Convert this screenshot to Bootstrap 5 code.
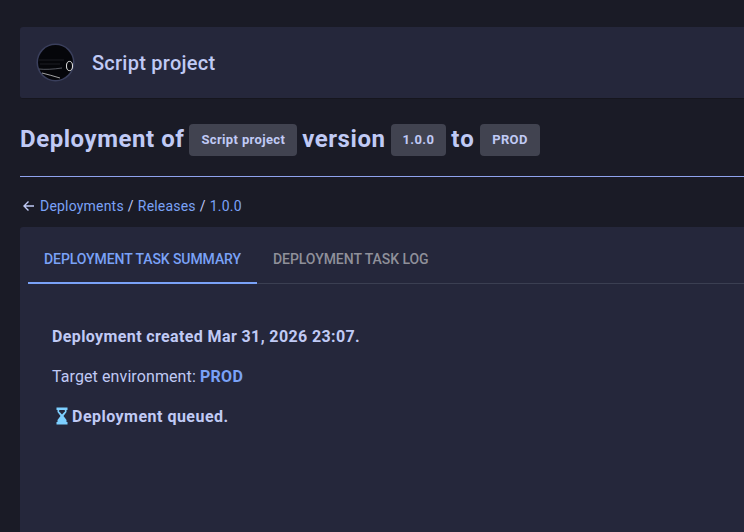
<!DOCTYPE html>
<html lang="en">
<head>
    <meta charset="UTF-8">
    <title>Deployment</title>
    <link href="https://cdn.jsdelivr.net/npm/bootstrap@5.3.0/dist/css/bootstrap.min.css" rel="stylesheet">
    <style>
        html, body { height: 532px; overflow: hidden; }
        body { background: #1a1b26; color: #c0caf5; font-family: "Roboto", "Noto Sans", sans-serif; font-size: 16px; width: 744px; }
        a { color: #7aa2f7; text-decoration: none; }
        .page-wrap { padding: 27px 0 0 20px; width: 780px; }
        .project-head { background: #25273b; height: 72px; border-bottom: 1px solid #16161e; border-radius: 3px 0 0 3px; padding-left: 16px; gap: 17px; }
        .project-logo { width: 39px; height: 39px; flex: none; }
        .project-name { font-size: 20px; font-weight: 500; letter-spacing: .25px; }
        .deploy-title { font-size: 24px; font-weight: 700; letter-spacing: .55px; height: 32px; margin: 25px 0 20px; gap: 5px; }
        .deploy-title > span:not(.tag-chip) { margin-top: -2px; }
        .deploy-title > .title-to { letter-spacing: 1.3px; }
        .tag-chip { background: #414350; font-size: 13px; font-weight: 700; letter-spacing: .36px; border-radius: 4px; height: 32px; padding: 0 12px; display: inline-flex; align-items: center; }
        .title-rule { height: 1px; background: #8fa3ee; margin-bottom: 19px; }
        .crumbs { font-size: 14px; letter-spacing: .2px; height: 20px; margin-bottom: 11px; gap: 4px; padding-left: 1px; }
        .crumb-sep { color: #c0caf5; }
        .task-panel { background: #25273b; height: 320px; padding-top: 6px; border-radius: 3px 0 0 0; }
        .task-tabs { margin-left: 8px; border-bottom: 1px solid #3b3f52; height: 51px; }
        .task-tab { font-size: 14px; font-weight: 500; letter-spacing: -.05px; padding: 2px 16px 0; height: 50px; display: flex; align-items: center; color: #8f909a; }
        .task-tab.active-tab { color: #7aa2f7; border-bottom: 2px solid #7aa2f7; height: 51px; padding-top: 3px; letter-spacing: -.08px; }
        .task-body { padding: 41px 0 0 32px; line-height: 24px; }
        .task-body p { margin: 0 0 16px; letter-spacing: .1px; }
        .task-body p.fw-bold { letter-spacing: .38px; }
        .task-body p.queued-line { letter-spacing: .48px; height: 24px; }
        .status-blue { color: #7aa2f7; font-weight: 700; letter-spacing: .3px; }
        .hourglass { width: 12px; height: 18px; margin: -3px 4px 0 4px; flex: none; }
    </style>
</head>
<body>
<div class="page-wrap">
    <div class="project-head d-flex align-items-center">
        <svg class="project-logo" viewBox="0 0 39 39">
            <circle cx="19.5" cy="19.5" r="19" fill="#3a3f5c"/>
            <circle cx="19.5" cy="19.5" r="17.5" fill="#05060a"/>
            <path d="M3 17 H28 M4 21 H24" stroke="#34363f" stroke-width=".5" fill="none"/>
            <path d="M3 26 Q12 27 26 25" stroke="#8a8d99" stroke-width=".6" fill="none"/>
            <path d="M6 30 Q14 32 24 35" stroke="#e6e6e6" stroke-width=".7" fill="none"/>
            <ellipse cx="33.5" cy="23" rx="3" ry="4.6" fill="none" stroke="#e6e6e6" stroke-width="1"/>
        </svg>
        <div class="project-name">Script project</div>
    </div>
    <h1 class="deploy-title d-flex align-items-center">
        <span>Deployment of</span>
        <span class="tag-chip">Script project</span>
        <span>version</span>
        <span class="tag-chip">1.0.0</span>
        <span class="title-to">to</span>
        <span class="tag-chip">PROD</span>
    </h1>
    <div class="title-rule"></div>
    <div class="crumbs d-flex align-items-center">
        <svg width="15" height="14" viewBox="0 0 15 14"><path d="M13 7H3M7.5 2.5 3 7l4.5 4.5" stroke="#c0caf5" stroke-width="1.4" fill="none"/></svg>
        <a href="#">Deployments</a><span class="crumb-sep">/</span>
        <a href="#">Releases</a><span class="crumb-sep">/</span>
        <a href="#">1.0.0</a>
    </div>
    <div class="task-panel">
        <div class="task-tabs d-flex">
            <div class="task-tab active-tab">DEPLOYMENT TASK SUMMARY</div>
            <div class="task-tab">DEPLOYMENT TASK LOG</div>
        </div>
        <div class="task-body">
            <p class="fw-bold">Deployment created Mar 31, 2026 23:07.</p>
            <p>Target environment: <span class="status-blue">PROD</span></p>
            <p class="fw-bold queued-line d-flex align-items-center"><svg class="hourglass" viewBox="0 0 12 18"><path d="M0.5 0.5h11v2.5H10.5v2L7.5 9l3 4v2h1v2.5H0.5V15h1v-2l3-4-3-4V3H0.5z" fill="#7dcfff"/><path d="M3.2 3h5.6v1.4L6 7.6 3.2 4.4z" fill="#25273b"/></svg><span>Deployment queued.</span></p>
        </div>
    </div>
</div>
<script src="https://cdn.jsdelivr.net/npm/bootstrap@5.3.0/dist/js/bootstrap.bundle.min.js"></script>
</body>
</html>
